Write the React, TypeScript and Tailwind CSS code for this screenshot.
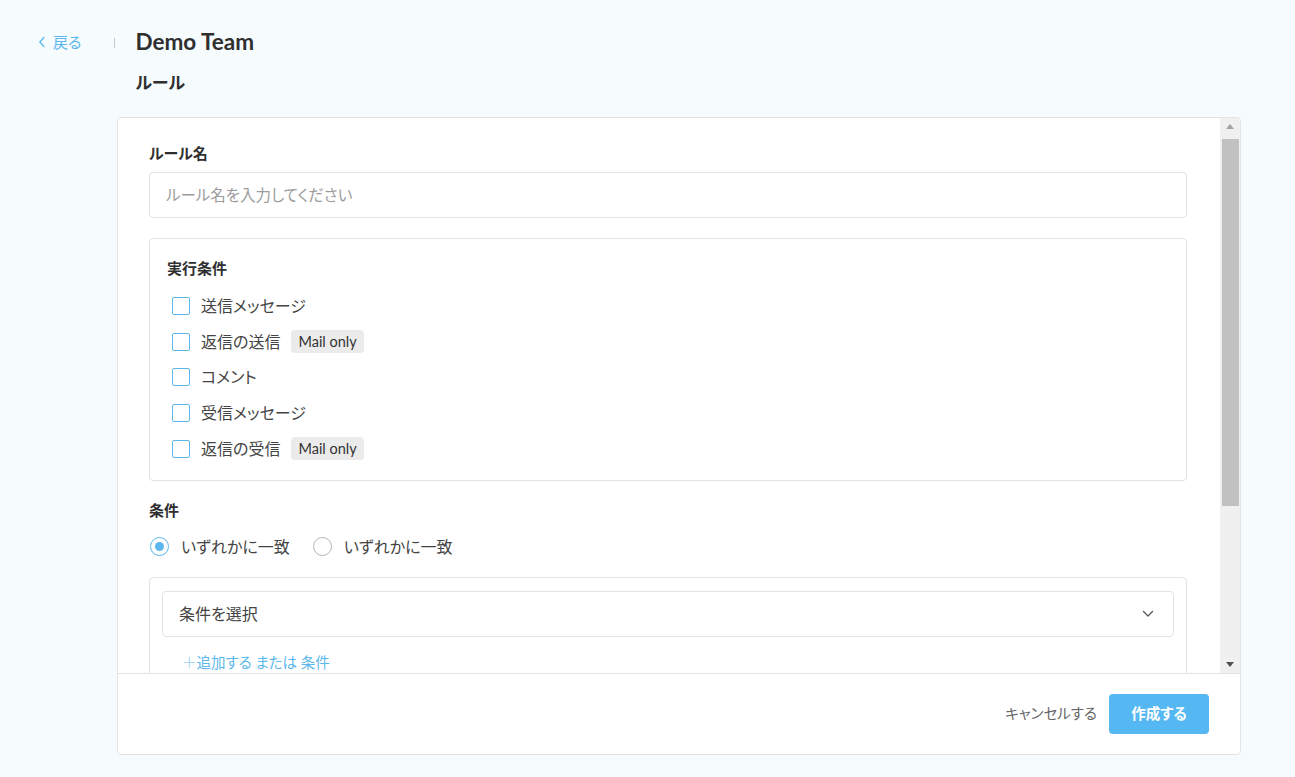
import React, { useState } from 'react';

const triggers = [
  { id: 'sent', label: '送信メッセージ', mailOnly: false },
  { id: 'reply-sent', label: '返信の送信', mailOnly: true },
  { id: 'comment', label: 'コメント', mailOnly: false },
  { id: 'received', label: '受信メッセージ', mailOnly: false },
  { id: 'reply-received', label: '返信の受信', mailOnly: true },
];

const Chevron = () => (
  <svg width="12" height="8" viewBox="0 0 12 8" fill="none">
    <path d="M1.5 1.5 6 6l4.5-4.5" stroke="#555" strokeWidth="1.3" strokeLinecap="round" strokeLinejoin="round" />
  </svg>
);

const SelectBox = ({ label }: { label: string }) => (
  <button className="flex h-[46px] w-full items-center justify-between rounded border border-[#e3e3e3] bg-white pl-4 pr-[19px] text-[16px] text-[#444]">
    <span>{label}</span>
    <Chevron />
  </button>
);

// classic scrollbar, drawn beside the clipped form body
const ScrollTrack = () => (
  <div className="flex w-[20px] shrink-0 flex-col items-stretch rounded-tr bg-[#f0f0f0]">
    <div className="flex h-[17px] items-center justify-center">
      <span className="h-0 w-0 border-x-[4.5px] border-b-[5px] border-x-transparent border-b-[#a3a3a3]" />
    </div>
    <div className="flex-1 pt-[4px] pb-[150px] pl-[2px] pr-[1px]">
      <div className="h-full bg-[#c1c1c1]" />
    </div>
    <div className="flex h-[17px] items-center justify-center">
      <span className="h-0 w-0 border-x-[4.5px] border-t-[5px] border-x-transparent border-t-[#505050]" />
    </div>
  </div>
);

const App: React.FC = () => {
  const [checked, setChecked] = useState<Record<string, boolean>>({});
  const [match, setMatch] = useState<'any' | 'all'>('any');

  return (
    <div
      className="min-h-[777px] bg-[#f6fbfe] text-[#333] [font-feature-settings:'palt']"
      style={{ fontFamily: 'Lato, "Noto Sans CJK JP", sans-serif' }}
    >
      {/* header row */}
      <div className="flex h-[84px] items-start pt-[28px]">
        <a className="ml-[38px] flex h-[28px] items-center gap-[7px] text-[15px] text-[#5cb7ec]">
          <svg width="8" height="12" viewBox="0 0 8 12" fill="none">
            <path d="M6 1.5 1.8 6 6 10.5" stroke="#5cb7ec" strokeWidth="1.3" strokeLinecap="round" strokeLinejoin="round" />
          </svg>
          戻る
        </a>
        <span className="ml-[33px] mt-[10px] h-[10px] w-px bg-[#c8c8c8]" />
        <div className="ml-[20px]">
          <h1 className="h-[28px] text-[22.5px] font-bold leading-[28px] text-[#2f2f2f]">Demo Team</h1>
          <h2 className="mt-[15px] text-[17px] font-bold leading-[24px] text-[#2f2f2f]">ルール</h2>
        </div>
      </div>

      {/* rule form card */}
      <div className="ml-[117px] mt-[33px] flex h-[638px] w-[1124px] flex-col rounded border border-[#e3e3e3] bg-white">
        <div className="flex min-h-0 flex-1">
          <div className="min-w-0 flex-1 overflow-hidden pl-[31px] pr-[33px] pt-[24px]">
            <label className="block text-[15px] font-bold leading-[22px] text-[#2f2f2f]">ルール名</label>
            <input
              className="mt-[8px] h-[46px] w-full rounded border border-[#e3e3e3] px-4 text-[15.5px] text-[#333] outline-none placeholder:text-[#9c9c9c]"
              placeholder="ルール名を入力してください"
            />

            <div className="mt-[20px] rounded border border-[#e3e3e3] px-[17px] pt-[16px] pb-[13px]">
              <div className="text-[15px] font-bold leading-[26px] text-[#2f2f2f]">実行条件</div>
              <div className="mt-[7px] flex flex-col">
                {triggers.map((t) => (
                  <label key={t.id} className="flex h-[35.75px] cursor-pointer items-center pl-[5px]">
                    <span
                      onClick={() => setChecked({ ...checked, [t.id]: !checked[t.id] })}
                      className={`h-[18px] w-[18px] rounded-[2px] border border-[#5cb7ec] ${checked[t.id] ? 'bg-[#5cb7ec]' : 'bg-white'}`}
                    />
                    <span className="ml-[11px] text-[16px] text-[#444]">{t.label}</span>
                    {t.mailOnly && (
                      <span className="ml-[11px] rounded bg-[#ebebeb] px-[7px] py-[2px] text-[14.5px] leading-[19px] text-[#333]">Mail only</span>
                    )}
                  </label>
                ))}
              </div>
            </div>

            <div className="mt-[18px] text-[15px] font-bold leading-[22px] text-[#2f2f2f]">条件</div>
            <div className="mt-[12px] flex h-[28px] items-center">
              {(['any', 'all'] as const).map((v) => (
                <label key={v} className="mr-[22px] flex cursor-pointer items-center" onClick={() => setMatch(v)}>
                  <span
                    className={`ml-px flex h-[19px] w-[19px] items-center justify-center rounded-full border ${match === v ? 'border-[#5cb7ec]' : 'border-[#b5b5b5]'}`}
                  >
                    {match === v && <span className="h-[9px] w-[9px] rounded-full bg-[#5cb7ec]" />}
                  </span>
                  <span className="ml-[12px] text-[16px] text-[#444]">いずれかに一致</span>
                </label>
              ))}
            </div>

            <div className="mt-[16px] rounded border border-[#e3e3e3] px-[12px] pt-[13px] pb-[14px]">
              <SelectBox label="条件を選択" />
              <button className="mt-[16px] ml-[20px] text-[14.5px] leading-[20px] text-[#5cb7ec]">
                <span className="text-[#a9d6f2]">＋</span>追加する または 条件
              </button>
            </div>

            <div className="mt-[22px] text-[15px] font-bold leading-[22px] text-[#2f2f2f]">アクション</div>
            <div className="mt-[8px] rounded border border-[#e3e3e3] px-[12px] pt-[13px] pb-[14px]">
              <SelectBox label="アクションを選択" />
            </div>
          </div>
          <ScrollTrack />
        </div>

        {/* footer */}
        <div className="flex h-[81px] shrink-0 items-center justify-end gap-[12px] border-t border-[#e3e3e3] pr-[31px]">
          <button className="text-[14.5px] text-[#666]">キャンセルする</button>
          <button className="h-[40px] w-[100px] rounded bg-[#56b8f2] text-[14.5px] font-bold text-white">作成する</button>
        </div>
      </div>
    </div>
  );
};

export default App;
